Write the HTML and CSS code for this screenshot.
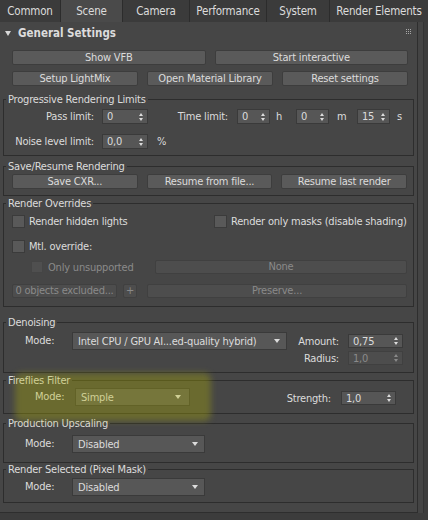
FILE: index.html
```html
<!DOCTYPE html>
<html>
<head>
<meta charset="utf-8">
<title>Render Setup - Scene</title>
<link rel="stylesheet" href="styles.css">
</head>
<body>
<div class="tabs">
  <div class="tab t-common">Common</div>
  <div class="tab t-scene active">Scene</div>
  <div class="tab t-camera">Camera</div>
  <div class="tab t-perf">Performance</div>
  <div class="tab t-system">System</div>
  <div class="tab t-re">Render Elements</div>
</div>
<div class="main">
  <div class="rollout">
    <div class="rhead">
      <svg class="tri" width="6" height="5" viewBox="0 0 6 5"><path d="M0 0H6L3 5z" fill="#d8d8d8"/></svg>
      <span class="rtitle">General Settings</span>
      <svg class="dots" width="5" height="5" viewBox="0 0 5 5" fill="#a8a8a8"><rect x="0" y="0" width="1" height="1"/><rect x="2" y="0" width="1" height="1"/><rect x="4" y="0" width="1" height="1"/><rect x="0" y="2" width="1" height="1"/><rect x="2" y="2" width="1" height="1"/><rect x="4" y="2" width="1" height="1"/><rect x="0" y="4" width="1" height="1"/><rect x="2" y="4" width="1" height="1"/><rect x="4" y="4" width="1" height="1"/></svg>
    </div>
    <div class="btnrow two">
      <button class="btn">Show VFB</button>
      <button class="btn">Start interactive</button>
    </div>
    <div class="btnrow three">
      <button class="btn">Setup LightMix</button>
      <button class="btn">Open Material Library</button>
      <button class="btn">Reset settings</button>
    </div>

    <fieldset class="grp g-prog">
      <legend>Progressive Rendering Limits</legend>
      <div class="gc">
        <div class="prow">
          <span class="lbl1">Pass limit:</span>
          <div class="spin w46"><span class="val">0</span><span class="arr"></span></div>
          <span class="tlbl">Time limit:</span>
          <div class="spin w33"><span class="val">0</span><span class="arr"></span></div>
          <span class="unit u-h">h</span>
          <div class="spin w33"><span class="val">0</span><span class="arr"></span></div>
          <span class="unit u-m">m</span>
          <div class="spin w33"><span class="val">15</span><span class="arr"></span></div>
          <span class="unit u-s">s</span>
        </div>
        <div class="prow">
          <span class="lbl1">Noise level limit:</span>
          <div class="spin w46"><span class="val">0,0</span><span class="arr"></span></div>
          <span class="pct">%</span>
        </div>
      </div>
    </fieldset>

    <fieldset class="grp g-save">
      <legend>Save/Resume Rendering</legend>
      <div class="gc">
        <button class="btn">Save CXR...</button>
        <button class="btn">Resume from file...</button>
        <button class="btn">Resume last render</button>
      </div>
    </fieldset>

    <fieldset class="grp g-ovr">
      <legend>Render Overrides</legend>
      <div class="gc">
        <div class="orow r1">
          <label class="chk"><span class="cb"></span><span>Render hidden lights</span></label>
          <label class="chk"><span class="cb"></span><span>Render only masks (disable shading)</span></label>
        </div>
        <div class="orow r2">
          <label class="chk"><span class="cb"></span><span>Mtl. override:</span></label>
        </div>
        <div class="orow r3">
          <label class="chk dis"><span class="cb"></span><span>Only unsupported</span></label>
          <button class="btn off b-none">None</button>
        </div>
        <div class="orow r4">
          <button class="btn off b-excl">0 objects excluded...</button>
          <button class="btn off b-plus">+</button>
          <button class="btn off b-pres">Preserve...</button>
        </div>
      </div>
    </fieldset>

    <fieldset class="grp g-den">
      <legend>Denoising</legend>
      <div class="gc">
        <span class="mlbl">Mode:</span>
        <div class="dd dd-den"><span class="txt">Intel CPU / GPU AI...ed-quality hybrid)</span><span class="darr"></span></div>
        <div class="dcol">
          <div class="drow"><span class="dlbl">Amount:</span><div class="spin w55"><span class="val">0,75</span><span class="arr"></span></div></div>
          <div class="drow"><span class="dlbl">Radius:</span><div class="spin w55 soff"><span class="val">1,0</span><span class="arr"></span></div></div>
        </div>
      </div>
    </fieldset>

    <fieldset class="grp g-ff">
      <legend>Fireflies Filter</legend>
      <div class="gc">
        <span class="mlbl">Mode:</span>
        <div class="dd dd-ff"><span class="txt">Simple</span><span class="darr"></span></div>
        <div class="spacer"></div>
        <div class="drow strength"><span class="slbl">Strength:</span><div class="spin w55"><span class="val">1,0</span><span class="arr"></span></div></div>
      </div>
    </fieldset>

    <fieldset class="grp g-pu">
      <legend>Production Upscaling</legend>
      <div class="gc">
        <span class="mlbl">Mode:</span>
        <div class="dd dd-sm"><span class="txt">Disabled</span><span class="darr"></span></div>
      </div>
    </fieldset>

    <fieldset class="grp g-rs">
      <legend>Render Selected (Pixel Mask)</legend>
      <div class="gc">
        <span class="mlbl">Mode:</span>
        <div class="dd dd-sm"><span class="txt">Disabled</span><span class="darr"></span></div>
      </div>
    </fieldset>

    <div class="hl"></div>
  </div>
  <div class="gutter"></div>
</div>
</body>
</html>
```

FILE: styles.css
```css
* { box-sizing: border-box; margin: 0; padding: 0; }
html, body { width: 428px; height: 520px; overflow: hidden; }
body {
  background: #3c3c3c;
  font-family: "DejaVu Sans Condensed", "DejaVu Sans", "Liberation Sans", sans-serif;
  font-size: 11px;
  letter-spacing: -0.2px;
  color: #dcdcdc;
}

/* tabs */
.tabs { display: flex; height: 22px; background: #3a3a3a; }
.tab {
  height: 22px; line-height: 22px; text-align: center;
  background: #3b3b3b; border-right: 1px solid #2c2c2c;
  white-space: nowrap; font-size: 11.5px;
}
.tab.active { background: #4a4a4a; }
.t-common { width: 61px; }
.t-scene { width: 62px; }
.t-camera { width: 67px; }
.t-perf { width: 77px; }
.t-system { width: 63px; }
.t-re { width: 98px; border-right: 0; }

.main { display: flex; height: 498px; }
.rollout {
  position: relative;
  width: 418px; height: 491px;
  background: #464646;
  border-right: 1px solid #2e2e2e;
  border-bottom: 1px solid #2e2e2e;
}
.gutter { flex: 1; background: #444; border-right: 1px solid #333; margin-right: 4px; height: 491px; }

/* rollout header */
.rhead { display: flex; align-items: center; height: 22px; padding-left: 5px; }
.tri { margin-right: 7px; }
.rtitle { font-weight: bold; font-size: 11.5px; letter-spacing: 0; }
.dots { margin-left: auto; margin-right: 6px; margin-top: -4px; }

/* buttons */
.btnrow { display: grid; gap: 9px; margin: 6px 9px 0 12px; }
.btnrow.two { grid-template-columns: 1fr 1fr; }
.btnrow.three { grid-template-columns: repeat(3, 1fr); }
.btn {
  height: 15px; line-height: 13px;
  background: #5a5a5a; border: 1px solid #3d3d3d; border-radius: 2px;
  color: #dcdcdc; font: inherit; letter-spacing: inherit;
  white-space: nowrap; overflow: hidden;
}
.btn.off { background: #4d4d4d; border-color: #404040; color: #8a8a8a; height: 14px; line-height: 12px; }

/* group boxes */
.grp { border: 1px solid #2d2d2d; margin: 0 3px; min-width: 0; }
.grp legend { margin-left: 2px; padding: 0 2px; height: 13px; line-height: 13px; }

/* spinners */
.spin {
  height: 15px; display: flex; align-items: center;
  background: #565656; border: 1px solid #3a3a3a;
  padding-left: 4px; line-height: 13px;
}
.spin .val { flex: 1; white-space: nowrap; }
.spin .arr { display: flex; flex-direction: column; gap: 2px; margin-right: 4px; }
.spin .arr::before, .spin .arr::after {
  content: ""; width: 0; height: 0;
  border-left: 2.5px solid transparent; border-right: 2.5px solid transparent;
}
.spin .arr::before { border-bottom: 3px solid #dcdcdc; }
.spin .arr::after { border-top: 3px solid #dcdcdc; }
.spin.soff { background: #4d4d4d; border-color: #404040; color: #8a8a8a; }
.spin.soff .arr::before { border-bottom-color: #8a8a8a; }
.spin.soff .arr::after { border-top-color: #8a8a8a; }
.w46 { width: 46px; }
.w33 { width: 33px; }
.w55 { width: 55px; height: 14px; }

/* progressive */
.g-prog { margin-top: 7px; }
.g-prog .gc { padding: 3px 0 6px 0; }
.prow { display: flex; align-items: center; height: 15px; }
.prow + .prow { margin-top: 10px; }
.lbl1 { width: 90px; text-align: right; margin-right: 8px; white-space: nowrap; }
.tlbl { width: 80px; text-align: right; margin-right: 9px; white-space: nowrap; }
.unit { flex: none; }
.u-h { width: 26px; padding-left: 6px; }
.u-m { width: 28px; padding-left: 8px; }
.u-s { padding-left: 7px; }
.pct { margin-left: 9px; }

/* save */
.g-save { margin-top: 4px; }
.g-save .gc { display: grid; grid-template-columns: repeat(3, 1fr); gap: 9px; padding: 1px 6px 6px 8px; }

/* overrides */
.g-ovr { margin-top: 1px; }
.g-ovr .gc { padding: 5px 6px 8px 8px; }
.orow { display: flex; align-items: center; }
.r1 { display: grid; grid-template-columns: 202px 1fr; height: 13px; }
.r2 { margin-top: 12px; height: 13px; }
.r3 { margin-top: 7px; height: 14px; }
.r4 { margin-top: 10px; height: 14px; }
.chk { display: flex; align-items: center; gap: 4px; white-space: nowrap; }
.cb { width: 13px; height: 13px; background: #595959; border: 1px solid #3b3b3b; flex: none; }
.chk.dis { padding-left: 19px; gap: 5px; color: #8a8a8a; }
.chk.dis .cb { width: 12px; height: 12px; background: #4f4f4f; border-color: #454545; }
.b-none { margin-left: auto; width: 252px; }
.b-excl { width: 105px; }
.b-plus { width: 14px; margin-left: 6px; }
.b-pres { flex: 1; margin-left: 10px; }

/* dropdowns */
.dd {
  height: 18px; display: flex; align-items: center;
  background: #575757; border: 1px solid #3a3a3a;
  padding: 0 6px 0 5px;
}
.dd .txt { flex: 1; white-space: nowrap; overflow: hidden; }
.darr {
  width: 0; height: 0; flex: none;
  border-left: 3px solid transparent; border-right: 3px solid transparent;
  border-top: 4px solid #dcdcdc;
}
.mlbl { flex: none; line-height: 18px; }

/* denoising */
.g-den { margin-top: 9px; }
.g-den .gc { display: flex; align-items: flex-start; padding: 3px 10px 7px 0; }
.g-den .mlbl { margin-left: 21px; width: 47px; }
.dd-den { width: 216px; }
.dcol { margin-top: 2px; display: flex; flex-direction: column; gap: 3px; }
.drow { display: flex; align-items: center; height: 14px; }
.dlbl { width: 52px; text-align: right; margin-right: 9px; }

/* fireflies */
.g-ff { margin-top: 1px; }
.g-ff .gc { display: flex; align-items: flex-start; padding: 1px 17px 7px 0; }
.g-ff .mlbl { margin-left: 31px; width: 40px; }
.dd-ff { width: 115px; padding-right: 8px; }
.spacer { flex: 1; }
.strength { margin-top: 3px; }
.slbl { margin-right: 10px; }

/* upscaling / pixel mask */
.g-pu { margin-top: 3px; }
.g-pu .gc { display: flex; padding: 5px 0 9px 0; }
.g-rs .gc { display: flex; padding: 2px 0 6px 0; }
.g-pu .mlbl, .g-rs .mlbl { margin-left: 21px; width: 47px; }
.dd-sm { width: 133px; }

/* yellow highlight marker drawn over the fireflies mode */
.hl {
  position: absolute; left: 15px; top: 351px;
  width: 196px; height: 48px;
  background: rgba(185, 185, 0, 0.32);
  border-radius: 7px;
  filter: blur(3px);
  pointer-events: none;
}
```
